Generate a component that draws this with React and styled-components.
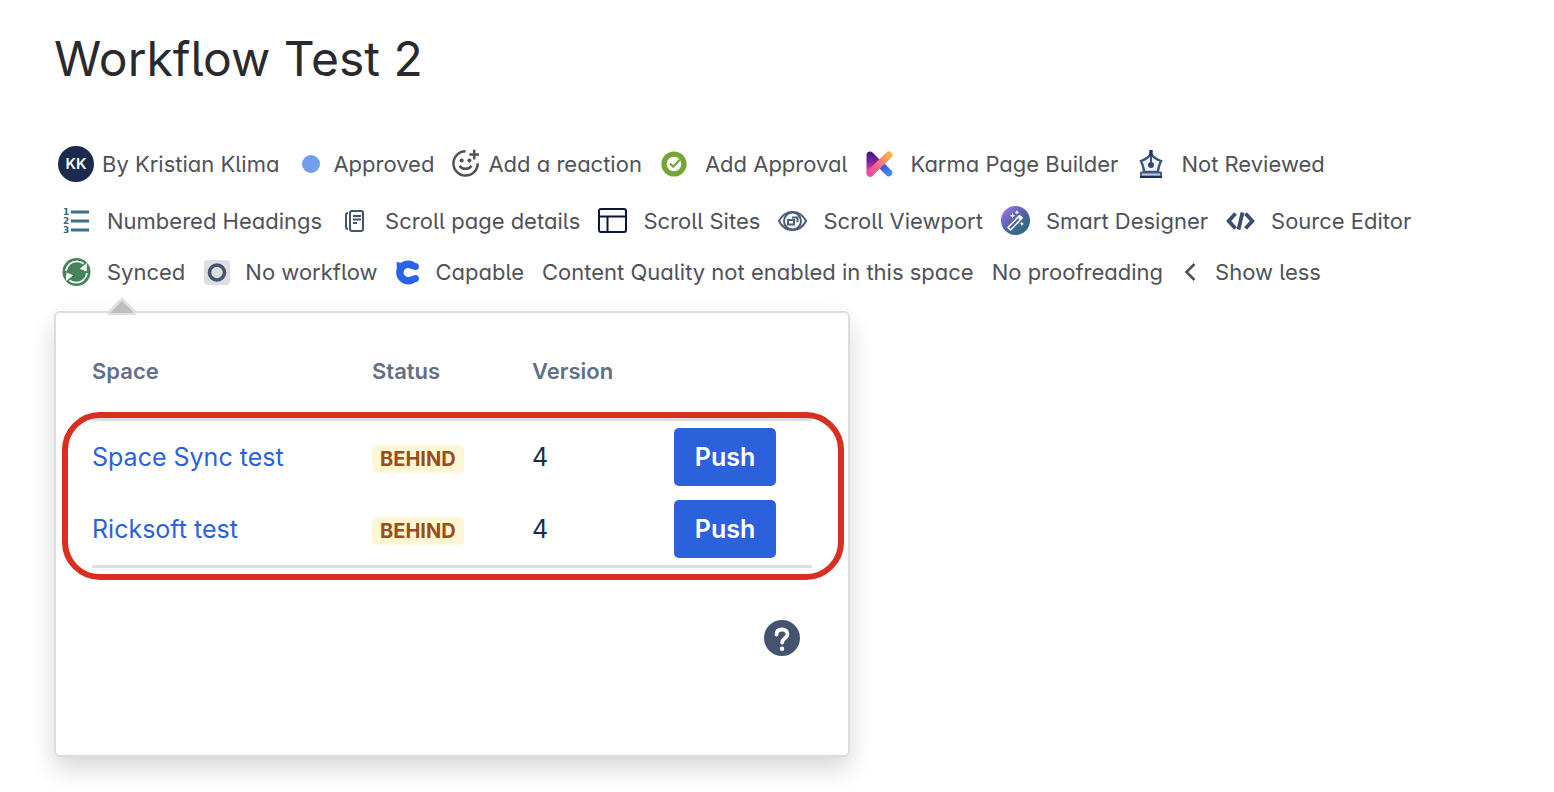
import React from "react";
import styled, { createGlobalStyle } from "styled-components";

const GlobalStyle = createGlobalStyle`
  *, *::before, *::after { box-sizing: border-box; }
  body {
    margin: 0;
    background: #ffffff;
    font-family: Inter, "Liberation Sans", sans-serif;
    color: #505258;
  }
`;

const Page = styled.main`
  padding: 28px 54px 35px;
`;

const Title = styled.h1`
  margin: 0 0 45px;
  font-size: 48px;
  line-height: 62px;
  font-weight: 400;
  color: #292a2e;
  font-feature-settings: "cv05", "cv11";
`;

const Byline = styled.div`
  display: flex;
  flex-direction: column;
  font-size: 22px;
  line-height: 30px;
  font-feature-settings: "cv05", "cv11";
`;

const BylineRow = styled.div`
  display: flex;
  flex-wrap: wrap;
  align-items: center;
  column-gap: 18px;
  min-height: ${(p) => p.$height}px;
  padding-left: ${(p) => p.$indent}px;
`;

const BylineItem = styled.button`
  display: inline-flex;
  align-items: center;
  gap: ${(p) => p.$gap ?? 16}px;
  padding: 0;
  border: 0;
  background: none;
  color: inherit;
  font: inherit;
  font-feature-settings: inherit;
  white-space: nowrap;
  cursor: pointer;
`;

const IconSlot = styled.span`
  display: inline-flex;
  flex: none;
  align-items: center;
  justify-content: center;
  width: ${(p) => p.$width ?? 29}px;

  svg { display: block; }
`;

const Avatar = styled.span`
  display: inline-flex;
  align-items: center;
  justify-content: center;
  width: 36px;
  height: 36px;
  border-radius: 50%;
  background: #1c2b4d;
  color: #ffffff;
  font-size: 15px;
  font-weight: 600;
`;

const StatusDot = styled.span`
  width: 18px;
  height: 18px;
  border-radius: 50%;
  background: #729eec;
`;

const Panel = styled.section`
  position: relative;
  max-width: 796px;
  margin-top: 16px;
  padding: 10px 36px 99px;
  border: 2px solid #dddddd;
  border-radius: 6px;
  background: #ffffff;
  box-shadow: 0 12px 24px rgba(0, 0, 0, 0.16);
`;

const Arrow = styled.svg`
  position: absolute;
  top: -16px;
  left: 52px;
`;

const TableWrap = styled.div`
  position: relative;
`;

const Table = styled.table`
  width: 100%;
  border-collapse: separate;
  border-spacing: 0;
  table-layout: fixed;
  color: #172b4d;
  font-size: 25px;
  line-height: 32px;
`;

const HeadCell = styled.th`
  width: ${(p) => p.$width};
  height: 98px;
  padding: 0;
  border-bottom: 3px solid #dcdfe4;
  text-align: left;
  font-size: 22px;
  font-weight: 600;
  color: #626f86;
`;

const Cell = styled.td`
  height: 72px;
  padding: 0;
  vertical-align: middle;

  tr:last-child > & {
    height: 75px;
    border-bottom: 3px solid #dcdfe4;
  }
`;

const SpaceLink = styled.a`
  color: #2b62dc;
  text-decoration: none;
`;

const Lozenge = styled.span`
  display: inline-block;
  padding: 0 8px;
  border-radius: 5px;
  background: #fff6d6;
  color: #974f19;
  font-size: 20px;
  line-height: 28px;
  font-weight: 700;
  vertical-align: middle;
`;

const PushButton = styled.button`
  display: block;
  width: 102px;
  height: 58px;
  padding: 0;
  border: 0;
  border-radius: 5px;
  background: #2b62dc;
  color: #ffffff;
  font: inherit;
  font-weight: 600;
  cursor: pointer;
`;

const Highlight = styled.div`
  position: absolute;
  left: -30px;
  right: -32px;
  bottom: -12px;
  height: 168px;
  border: 6px solid #d82f22;
  border-radius: 38px;
  pointer-events: none;
`;

const PanelFooter = styled.footer`
  display: flex;
  justify-content: flex-end;
  padding: 52px 12px 0 0;
`;

const HelpButton = styled.button`
  display: block;
  padding: 0;
  border: 0;
  background: none;
  cursor: pointer;

  svg { display: block; }
`;

const ReactionIcon = () => (
  <svg width="29" height="29" viewBox="0 0 29 29" fill="none" stroke="#505258" strokeWidth="2.6">
    <path d="M14 1.8A12.6 12.6 0 1 0 26.7 14.3" />
    <path d="M23 0.3v10M18 5.3h10" />
    <path d="M7.8 16.8c2.7 4.3 9.7 4.3 12.4 0" />
    <circle cx="10" cy="11.3" r="2.1" fill="#505258" stroke="none" />
    <circle cx="18" cy="11.3" r="2.1" fill="#505258" stroke="none" />
  </svg>
);

const ApprovalIcon = () => (
  <svg width="26" height="26" viewBox="0 0 26 26">
    <circle cx="13" cy="13" r="12.6" fill="#74a633" />
    <circle cx="13" cy="13" r="7.3" fill="#fff" />
    <path d="M9 12.5l3.2 3.2 6.6-7" fill="none" stroke="#74a633" strokeWidth="2.2" />
  </svg>
);

const KarmaIcon = () => (
  <svg width="27" height="26" viewBox="0 0 27 26">
    <defs>
      <linearGradient id="karmaBar" x1="0" y1="0" x2="0" y2="1">
        <stop offset="0.1" stopColor="#4b1590" />
        <stop offset="0.45" stopColor="#8a249f" />
        <stop offset="0.8" stopColor="#ee46a5" />
      </linearGradient>
      <linearGradient id="karmaArm" gradientUnits="userSpaceOnUse" x1="4" y1="22" x2="23" y2="4">
        <stop offset="0" stopColor="#f047a4" />
        <stop offset="0.5" stopColor="#f0707f" />
        <stop offset="1" stopColor="#f6b445" />
      </linearGradient>
      <linearGradient id="karmaLeg" gradientUnits="userSpaceOnUse" x1="13" y1="13" x2="23" y2="23">
        <stop offset="0" stopColor="#4a3bc0" />
        <stop offset="1" stopColor="#3a8bf7" />
      </linearGradient>
    </defs>
    <path d="M14 13l8.7 8.7" stroke="url(#karmaLeg)" strokeWidth="7.2" strokeLinecap="round" />
    <path d="M0.5 4C0.5 0.6 4.3-0.6 6.8 1.7L17 12 7 24.6C4.5 26.8 0.5 25.4 0.5 22z" fill="url(#karmaBar)" />
    <path d="M4.2 22L22.8 4.1" stroke="url(#karmaArm)" strokeWidth="7.2" strokeLinecap="round" />
  </svg>
);

const PenIcon = () => (
  <svg width="24" height="28" viewBox="0 0 24 28" fill="none" stroke="#3d5583" strokeWidth="2.4">
    <path d="M12 4C9.500 7.500 6 9.500 2 11c1.800 3.500 2.600 7 3.200 11h13.600c.6-4 1.400-7.500 3.200-11-4-1.500-7.500-3.500-10-7z" fill="#eef1f6" />
    <path d="M12 0v6" stroke="#1b3365" strokeWidth="3.4" />
    <path d="M12 6v8" strokeWidth="2" />
    <circle cx="12" cy="15" r="3" fill="#2f4878" stroke="none" />
    <rect x="2" y="22.5" width="20" height="4" fill="#b9c3d5" strokeWidth="1.8" />
    <path d="M1 27h22" stroke="#1b2f5d" strokeWidth="2" />
  </svg>
);

const NumberedIcon = () => (
  <svg width="29" height="26" viewBox="0 0 29 26">
    <g fill="#32687f" fontFamily="DejaVu Sans" fontWeight="700" fontSize="9">
      <text x="1" y="7">1</text>
      <text x="1" y="16">2</text>
      <text x="1" y="25">3</text>
    </g>
    <path d="M9 4h18M9 13h18M9 22h18" stroke="#3a7089" strokeWidth="2.8" />
  </svg>
);

const PageDetailsIcon = () => (
  <svg width="20" height="22" viewBox="0 0 20 22" fill="none" stroke="#44546f" strokeWidth="2">
    <rect x="5" y="1" width="13" height="20" rx="2" />
    <path d="M3 3C1.5 3 1 3.8 1 5.3v11.4C1 18.2 1.5 19 3 19" />
    <path d="M8 6h8M8 9.5h8M8 13h4" />
  </svg>
);

const SitesIcon = () => (
  <svg width="29" height="25" viewBox="0 0 29 25" fill="none" stroke="#0b1640" strokeWidth="2">
    <rect x="1" y="1" width="27" height="23" rx="2" />
    <path d="M1 8.5h27M9.5 8.5V24" />
  </svg>
);

const ViewportIcon = () => (
  <svg width="29" height="20" viewBox="0 0 29 20" fill="none" stroke="#4d5c78" strokeWidth="2">
    <path d="M1 10C7-2 22-2 28 10 22 22 7 22 1 10z" />
    <circle cx="14.5" cy="10" r="8.5" />
    <rect x="10" y="9" width="6" height="4.5" />
    <path d="M14 6.5h5.5v4.5" />
  </svg>
);

const WandIcon = () => (
  <svg width="29" height="29" viewBox="0 0 29 29" fill="none">
    <defs>
      <linearGradient id="wandDisc" x1="0.1" y1="0.1" x2="0.85" y2="0.9">
        <stop offset="0" stopColor="#9673e8" />
        <stop offset="0.5" stopColor="#5563a8" />
        <stop offset="1" stopColor="#276b78" />
      </linearGradient>
    </defs>
    <circle cx="14.5" cy="14.5" r="14.5" fill="url(#wandDisc)" />
    <path d="M7 21.5L18.5 9.5l2.6 2.4L9.6 24z" stroke="#fff" strokeWidth="1.5" strokeLinejoin="round" />
    <path d="M16.5 11.5l2-2 2.6 2.4-2 2z" fill="#fff" />
    <path d="M11.5 7l.8 1.9 1.9.8-1.9.8-.8 1.9-.8-1.9-1.9-.8 1.9-.8zM16 4l.7 1.5 1.5.7-1.5.7L16 8.4l-.7-1.5-1.5-.7 1.5-.7zM20.8 15.5l.7 1.7 1.7.7-1.7.7-.7 1.7-.7-1.7-1.7-.7 1.7-.7z" fill="#fff" />
  </svg>
);

const SourceIcon = () => (
  <svg width="29" height="20" viewBox="0 0 29 20" fill="none" stroke="#3d4d6e" strokeWidth="3.8">
    <path d="M9.5 2.5L2.7 10l6.800 7.5M19.5 2.5l6.8 7.5-6.8 7.5M16.5 1.5l-4 17" />
  </svg>
);

const SyncedIcon = () => (
  <svg width="29" height="28" viewBox="0 0 29 28" fill="none">
    <circle cx="14.5" cy="14" r="14" fill="#44835c" />
    <path d="M4 12.8C5 7 9.5 3.4 14.8 3.4c2.7 0 5 .9 6.8 2.4" stroke="#fff" strokeWidth="1.8" />
    <path d="M25.2 4.8l-.6 8.6-6.8-2.6z" fill="#fff" />
    <path d="M25 15.2c-1 5.8-5.5 9.4-10.8 9.4-2.7 0-5-.9-6.8-2.4" stroke="#fff" strokeWidth="1.8" />
    <path d="M3.8 23.2l.6-8.6 6.8 2.6z" fill="#fff" />
  </svg>
);

const WorkflowIcon = () => (
  <svg width="26" height="25" viewBox="0 0 26 25">
    <rect width="26" height="25" rx="4" fill="#dddee1" />
    <circle cx="13" cy="12.5" r="7.5" fill="none" stroke="#44546f" strokeWidth="3.6" />
  </svg>
);

const CapableIcon = () => (
  <svg width="24" height="25" viewBox="0 0 24 25">
    <path d="M18.2 6.8A8.300 8.300 0 1 0 18.200 18.200" fill="none" stroke="#2a62f0" strokeWidth="7.4" />
    <circle cx="19.300" cy="6.500" r="3.600" fill="#2a62f0" />
    <circle cx="19.300" cy="18.500" r="3.600" fill="#2a62f0" />
    <path d="M0.500 2l4.500.8 1 3-5 5z" fill="#2a62f0" />
  </svg>
);

const ChevronIcon = () => (
  <svg width="18" height="20" viewBox="0 0 18 20" fill="none" stroke="#505258" strokeWidth="2.6">
    <path d="M13.500 2L5.500 10l8 8" />
  </svg>
);

const HelpIcon = () => (
  <svg width="36" height="36" viewBox="0 0 36 36" fill="none">
    <circle cx="18" cy="18" r="18" fill="#44546f" />
    <path d="M12.5 14.5c0-3.5 2.3-5 5.500-5s5.500 1.800 5.500 4.800c0 4-5.300 4-5.300 8.200" stroke="#fff" strokeWidth="3.8" strokeLinecap="round" />
    <circle cx="18" cy="28.7" r="2.2" fill="#fff" />
  </svg>
);

const rows = [
  {
    height: 57,
    indent: 4,
    items: [
      { label: "By Kristian Klima", icon: <Avatar>KK</Avatar>, width: 36, gap: 8 },
      { label: "Approved", icon: <StatusDot />, width: 28, gap: 8 },
      { label: "Add a reaction", icon: <ReactionIcon />, width: 28, gap: 8 },
      { label: "Add Approval", icon: <ApprovalIcon /> },
      { label: "Karma Page Builder", icon: <KarmaIcon /> },
      { label: "Not Reviewed", icon: <PenIcon /> },
    ],
  },
  {
    height: 57,
    indent: 8,
    items: [
      { label: "Numbered Headings", icon: <NumberedIcon /> },
      { label: "Scroll page details", icon: <PageDetailsIcon /> },
      { label: "Scroll Sites", icon: <SitesIcon /> },
      { label: "Scroll Viewport", icon: <ViewportIcon /> },
      { label: "Smart Designer", icon: <WandIcon /> },
      { label: "Source Editor", icon: <SourceIcon /> },
    ],
  },
  {
    height: 46,
    indent: 8,
    items: [
      { label: "Synced", icon: <SyncedIcon /> },
      { label: "No workflow", icon: <WorkflowIcon />, width: 28, gap: 14 },
      { label: "Capable", icon: <CapableIcon />, width: 26, gap: 14 },
      { label: "Content Quality not enabled in this space" },
      { label: "No proofreading" },
      { label: "Show less", icon: <ChevronIcon />, width: 18, gap: 16 },
    ],
  },
];

const spaces = [
  { name: "Space Sync test", status: "BEHIND", version: 4 },
  { name: "Ricksoft test", status: "BEHIND", version: 4 },
];

export default function App() {
  return (
    <>
      <GlobalStyle />
      <Page>
        <Title>Workflow Test 2</Title>
        <Byline>
          {rows.map((row, i) => (
            <BylineRow key={i} $height={row.height} $indent={row.indent}>
              {row.items.map((item) => (
                <BylineItem key={item.label} type="button" $gap={item.gap}>
                  {item.icon && (
                    <IconSlot $width={item.width} aria-hidden="true">
                      {item.icon}
                    </IconSlot>
                  )}
                  {item.label}
                </BylineItem>
              ))}
            </BylineRow>
          ))}
        </Byline>
        <Panel aria-label="Sync status">
          <Arrow width="28" height="18" viewBox="0 0 28 18" aria-hidden="true">
            <path d="M14 0l14 14v4H0v-4z" fill="#dfe0e0" />
            <path d="M14 4l11 11v1H3v-1z" fill="#bcbebd" />
          </Arrow>
          <TableWrap>
            <Table>
              <thead>
                <tr>
                  <HeadCell scope="col" $width="280px">Space</HeadCell>
                  <HeadCell scope="col" $width="160px">Status</HeadCell>
                  <HeadCell scope="col" $width="142px">Version</HeadCell>
                  <HeadCell as="td" $width="auto" />
                </tr>
              </thead>
              <tbody>
                {spaces.map((space) => (
                  <tr key={space.name}>
                    <Cell><SpaceLink href="#">{space.name}</SpaceLink></Cell>
                    <Cell><Lozenge>{space.status}</Lozenge></Cell>
                    <Cell>{space.version}</Cell>
                    <Cell><PushButton type="button">Push</PushButton></Cell>
                  </tr>
                ))}
              </tbody>
            </Table>
            <Highlight />
          </TableWrap>
          <PanelFooter>
            <HelpButton type="button" aria-label="Help"><HelpIcon /></HelpButton>
          </PanelFooter>
        </Panel>
      </Page>
    </>
  );
}
